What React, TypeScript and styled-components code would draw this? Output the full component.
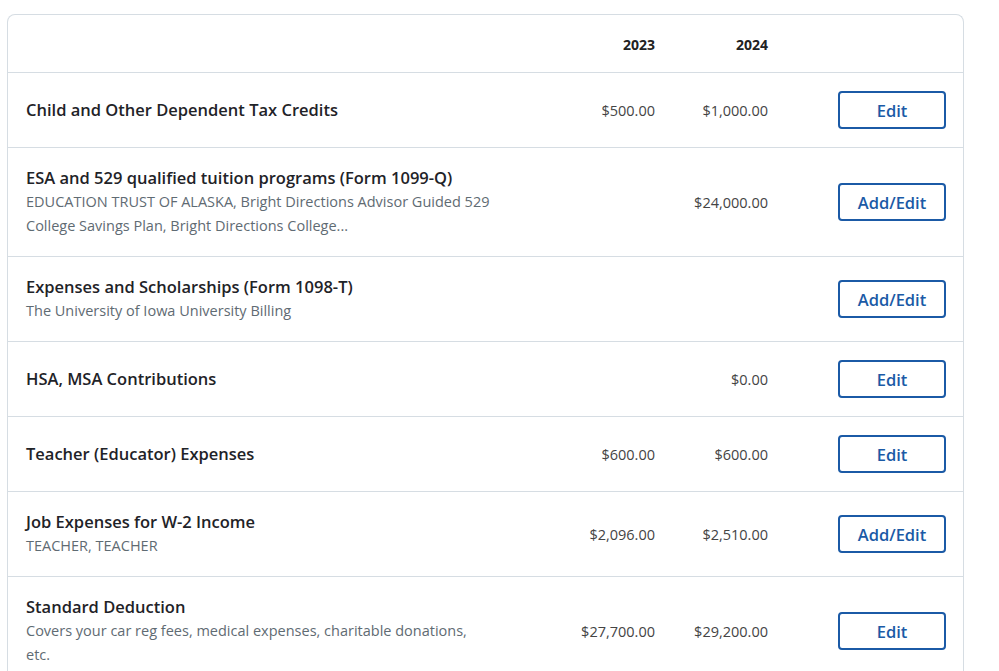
import React from "react";
import styled, { createGlobalStyle } from "styled-components";

const Global = createGlobalStyle`
  body { margin: 0; background: #fff; font-family: "Open Sans", "Noto Sans", sans-serif; }
`;

const Card = styled.div`
  margin: 14px 0 0 7px;
  width: 955px;
  border: 1px solid #d6dde3;
  border-bottom: none;
  border-radius: 8px 8px 0 0;
  background: #fff;
`;

const Row = styled.div<{ $head?: boolean }>`
  display: grid;
  grid-template-columns: 1fr 110px 113px 70px 108px;
  align-items: center;
  padding: ${(p) => (p.$head ? "0" : "18px")} 17px ${(p) => (p.$head ? "0" : "18px")} 18px;
  min-height: ${(p) => (p.$head ? "58px" : "75px")};
  border-bottom: 1px solid #d6dde3;
  box-sizing: border-box;
`;

const Year = styled.div`
  text-align: right;
  font-weight: 700;
  font-size: 14px;
  color: #222;
  padding-top: 2px;
`;

const Label = styled.div`
  max-width: 466px;
`;

const Title = styled.div`
  font-size: 16.5px;
  font-weight: 600;
  color: #1f2328;
  line-height: 24px;
`;

const Sub = styled.div`
  font-size: 14.5px;
  color: #5f6b73;
  line-height: 24px;
`;

const Amt = styled.div`
  text-align: right;
  font-size: 14.5px;
  color: #444;
`;

const Btn = styled.button`
  grid-column: 5;
  height: 38px;
  border: 2px solid #1b5aa6;
  border-radius: 4px;
  background: #fff;
  color: #1b5aa6;
  font-family: inherit;
  font-size: 16.5px;
  font-weight: 600;
`;

const rows = [
  { t: "Child and Other Dependent Tax Credits", a: "$500.00", b: "$1,000.00", btn: "Edit" },
  { t: "ESA and 529 qualified tuition programs (Form 1099-Q)", s: "EDUCATION TRUST OF ALASKA, Bright Directions Advisor Guided 529 College Savings Plan, Bright Directions College...", a: "", b: "$24,000.00", btn: "Add/Edit" },
  { t: "Expenses and Scholarships (Form 1098-T)", s: "The University of Iowa University Billing", a: "", b: "", btn: "Add/Edit" },
  { t: "HSA, MSA Contributions", a: "", b: "$0.00", btn: "Edit" },
  { t: "Teacher (Educator) Expenses", a: "$600.00", b: "$600.00", btn: "Edit" },
  { t: "Job Expenses for W-2 Income", s: "TEACHER, TEACHER", a: "$2,096.00", b: "$2,510.00", btn: "Add/Edit" },
  { t: "Standard Deduction", s: "Covers your car reg fees, medical expenses, charitable donations, etc.", a: "$27,700.00", b: "$29,200.00", btn: "Edit" },
];

export default function App() {
  return (
    <>
      <Global />
      <Card>
        <Row $head>
          <div />
          <Year>2023</Year>
          <Year>2024</Year>
        </Row>
        {rows.map((r) => (
          <Row key={r.t}>
            <Label>
              <Title>{r.t}</Title>
              {r.s && <Sub>{r.s}</Sub>}
            </Label>
            <Amt>{r.a}</Amt>
            <Amt>{r.b}</Amt>
            <Btn>{r.btn}</Btn>
          </Row>
        ))}
      </Card>
    </>
  );
}
